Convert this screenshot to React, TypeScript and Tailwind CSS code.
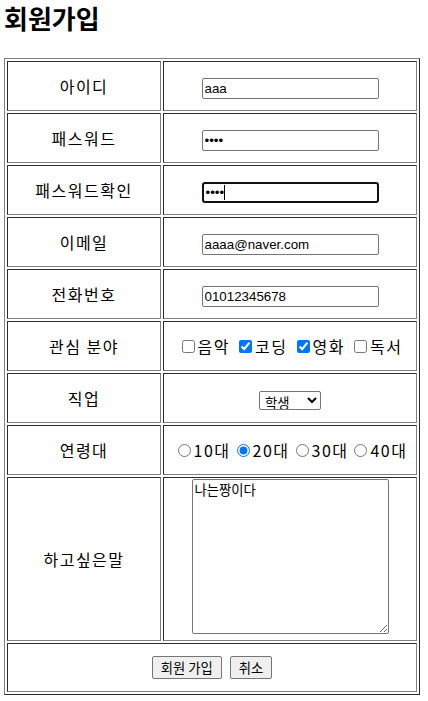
import type { ReactNode } from 'react';

const cellBorder =
  'border border-t-[#2c2c2c] border-l-[#2c2c2c] border-r-[#808080] border-b-[#808080]';

const textInput =
  "w-[177px] h-[21px] rounded-[2px] border border-[#767676] bg-white px-[2px] text-[13.33px] tracking-normal text-black font-['Liberation_Sans','Noto_Sans_CJK_KR',sans-serif] outline-none align-middle";

function Row({ label, children, tall }: { label: string; children: ReactNode; tall?: boolean }) {
  return (
    <tr>
      <td className={`w-[154px] ${tall ? 'h-[164px]' : 'h-[50px]'} ${cellBorder} text-center align-middle tracking-[1.5px]`}>
        {label}
      </td>
      <td className={`w-[254px] ${cellBorder} text-center ${tall ? 'align-top' : 'align-middle'}`}>
        {children}
      </td>
    </tr>
  );
}

export default function App() {
  const hobbies = [
    { name: '음악', checked: false },
    { name: '코딩', checked: true },
    { name: '영화', checked: true },
    { name: '독서', checked: false },
  ];
  const ages = ['10대', '20대', '30대', '40대'];

  return (
    <div className="pl-1 pt-[2px] text-black text-[16px] font-['Noto_Sans_CJK_KR','Liberation_Sans',sans-serif]">
      <h2 className="text-[26px] font-bold leading-[32px] mb-[24px]">회원가입</h2>

      <form>
        <table className="w-[416px] table-fixed border-separate border-spacing-[2px] border border-t-[#808080] border-l-[#808080] border-r-[#2c2c2c] border-b-[#2c2c2c]">
          <tbody>
            <Row label="아이디">
              <input type="text" defaultValue="aaa" className={textInput} />
            </Row>
            <Row label="패스워드">
              <input type="password" defaultValue="aaaa" className={textInput} />
            </Row>
            <Row label="패스워드확인">
              <span className="relative inline-block align-middle">
                <input
                  type="password"
                  defaultValue="aaaa"
                  className="w-[177px] h-[21px] rounded-[3px] border-2 border-[#101010] bg-white px-[2px] text-[13.33px] font-['Liberation_Sans',sans-serif] outline-none block"
                />
                {/* text caret */}
                <span className="absolute left-[22px] top-[3px] h-[15px] w-px bg-black" />
              </span>
            </Row>
            <Row label="이메일">
              <input type="email" defaultValue="aaaa@naver.com" className={textInput} />
            </Row>
            <Row label="전화번호">
              <input type="tel" defaultValue="01012345678" className={textInput} />
            </Row>
            <Row label="관심 분야">
              <div className="flex items-center justify-center gap-[9px] pl-[4px] tracking-[1.5px]">
                {hobbies.map((h) => (
                  <label key={h.name} className="flex items-center">
                    <input
                      type="checkbox"
                      defaultChecked={h.checked}
                      className="w-[13px] h-[13px] mr-[3px]"
                    />
                    {h.name}
                  </label>
                ))}
              </div>
            </Row>
            <Row label="직업">
              <select
                defaultValue="학생"
                className="w-[62px] h-[19px] rounded-[2px] border border-[#767676] bg-white pl-[1px] text-[13.33px] tracking-normal align-middle"
              >
                <option>학생</option>
                <option>회사원</option>
                <option>기타</option>
              </select>
            </Row>
            <Row label="연령대">
              <div className="flex items-center justify-center gap-[6px] pl-[5px] tracking-[1.5px]">
                {ages.map((a) => (
                  <label key={a} className="flex items-center">
                    <input
                      type="radio"
                      name="age"
                      defaultChecked={a === '20대'}
                      className="w-[13px] h-[13px] mr-[3px]"
                    />
                    {a}
                  </label>
                ))}
              </div>
            </Row>
            <Row label="하고싶은말" tall>
              <textarea
                defaultValue="나는짱이다"
                className="block mx-auto mt-[1px] w-[197px] h-[155px] rounded-[2px] border border-[#767676] bg-white p-[2px] text-[13.33px] tracking-normal leading-[16px] outline-none"
              />
            </Row>
            <tr>
              <td colSpan={2} className={`h-[49px] ${cellBorder} align-middle`}>
                <div className="flex justify-center gap-2">
                  <button
                    type="submit"
                    className="h-[23px] rounded-[2px] border border-[#767676] bg-[#efefef] px-[8px] text-[13.33px]"
                  >
                    회원 가입
                  </button>
                  <button
                    type="reset"
                    className="h-[23px] rounded-[2px] border border-[#767676] bg-[#efefef] px-[8px] text-[13.33px]"
                  >
                    취소
                  </button>
                </div>
              </td>
            </tr>
          </tbody>
        </table>
      </form>
    </div>
  );
}
